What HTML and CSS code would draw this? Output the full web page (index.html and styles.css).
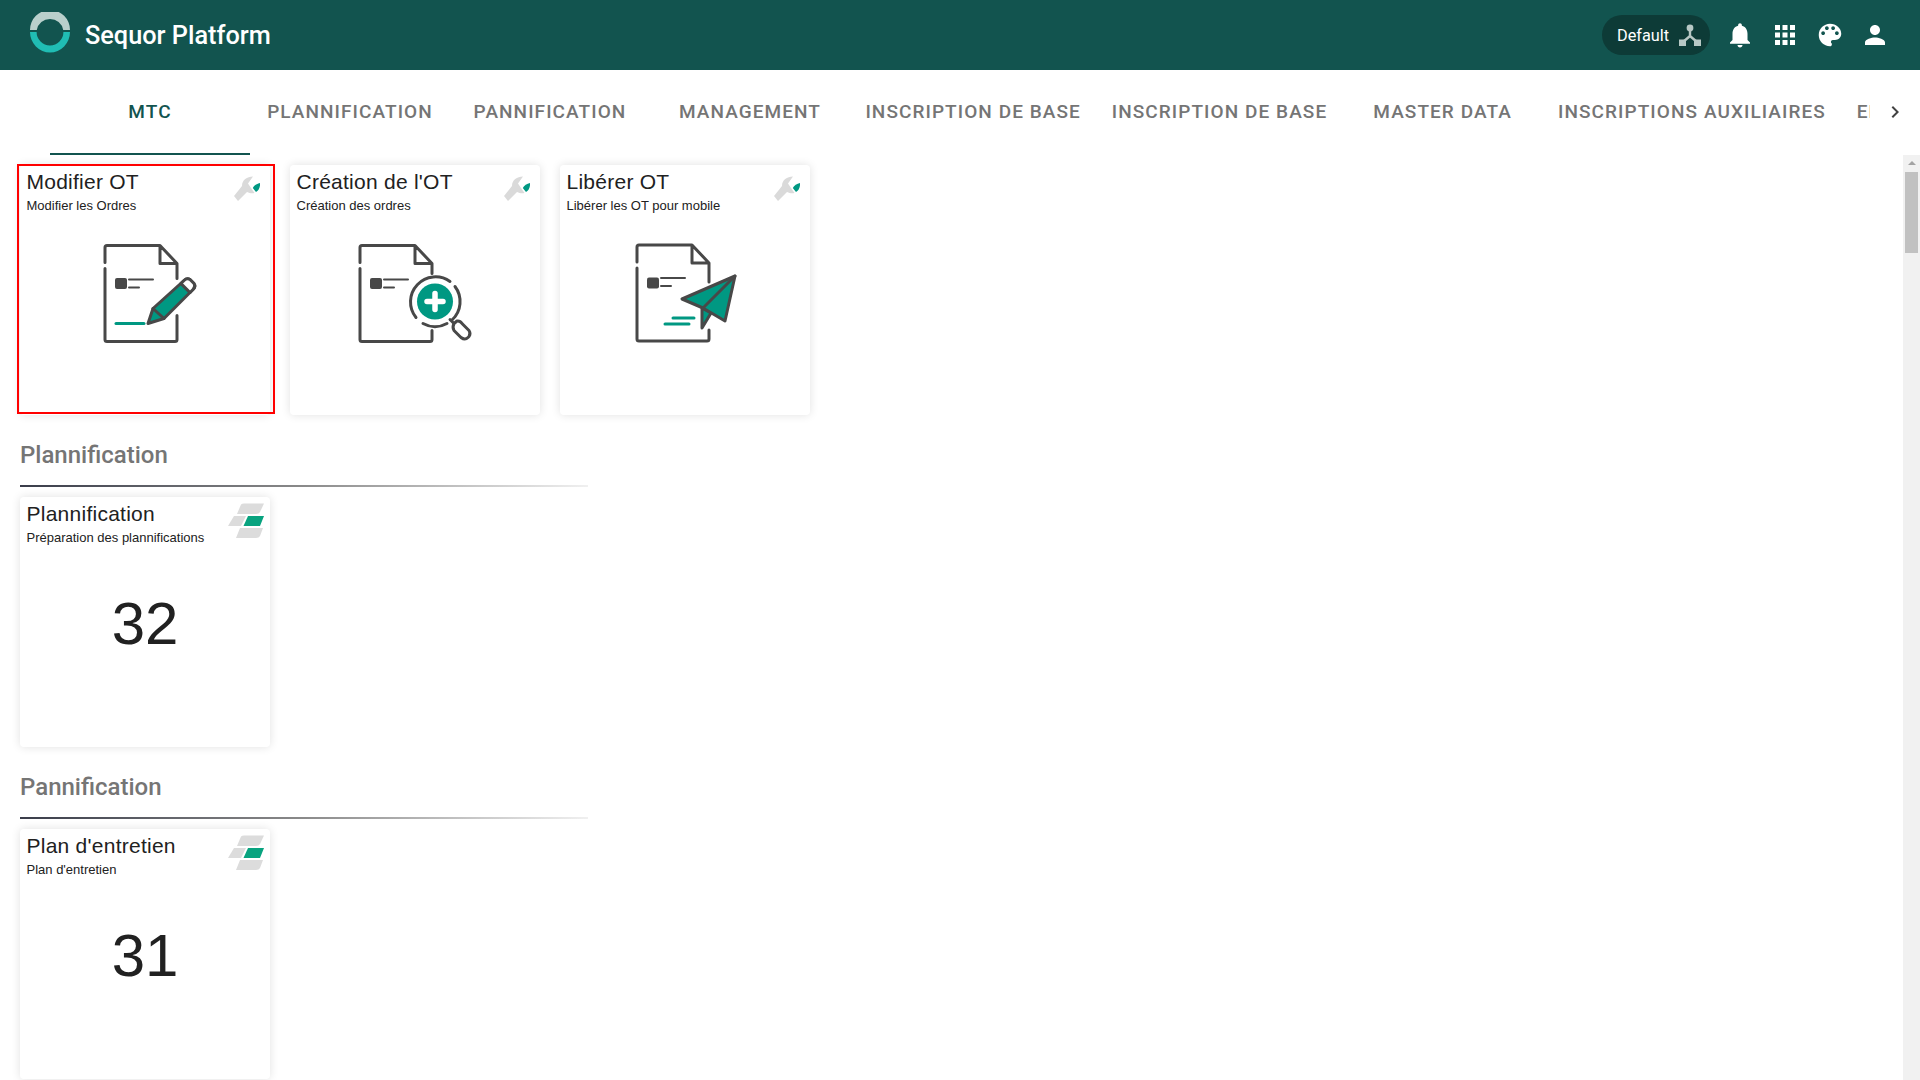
FILE: index.html
```html
<!DOCTYPE html>
<html lang="fr">
<head>
    <meta charset="UTF-8">
    <title>Sequor Platform</title>
    <link rel="stylesheet" href="styles.css">
</head>
<body>
    <header class="topbar">
        <div class="brand">
            <svg class="logo" width="42" height="42" viewBox="0 0 42 42">
                <path d="M1 18 A20 20 0 0 1 41 18 L34.2 18 A13.4 13.4 0 0 0 7.8 18 Z" fill="#b9d0cc"/>
                <path d="M1 20 L7.6 20 A13.4 13.4 0 0 0 34.4 20 L41 20 A20 20.5 0 0 1 1 20 Z" fill="#20bdb4"/>
            </svg>
            <span class="brandName">Sequor Platform</span>
        </div>
        <div class="actions">
            <div class="envPill">
                <span>Default</span>
                <svg width="24" height="24" viewBox="0 0 24 24">
                    <circle cx="12" cy="5" r="3.4" fill="#b7c8c5"/>
                    <path d="M12 6v7M12 13L5 19M12 13l7 6" stroke="#b7c8c5" stroke-width="2.4" fill="none"/>
                    <rect x="1" y="16.5" width="7" height="6.5" fill="#b7c8c5"/>
                    <rect x="16" y="16.5" width="7" height="6.5" fill="#b7c8c5"/>
                </svg>
            </div>
            <svg class="topIcon" viewBox="0 0 24 24"><path d="M12 22c1.1 0 2-.9 2-2h-4c0 1.1.89 2 2 2zm6-6v-5c0-3.07-1.64-5.64-4.5-6.32V4c0-.83-.67-1.5-1.5-1.5s-1.5.67-1.5 1.5v.68C7.63 5.36 6 7.92 6 11v5l-2 2v1h16v-1l-2-2z"/></svg>
            <svg class="topIcon" viewBox="0 0 24 24"><path d="M4 8h4V4H4v4zm6 12h4v-4h-4v4zm-6 0h4v-4H4v4zm0-6h4v-4H4v4zm6 0h4v-4h-4v4zm6-10v4h4V4h-4zm-6 4h4V4h-4v4zm6 6h4v-4h-4v4zm0 6h4v-4h-4v4z"/></svg>
            <svg class="topIcon" viewBox="0 0 24 24"><path d="M12 3c-4.97 0-9 4.03-9 9s4.03 9 9 9c.83 0 1.5-.67 1.5-1.5 0-.39-.15-.74-.39-1.01-.23-.26-.38-.61-.38-.99 0-.83.67-1.5 1.5-1.5H16c2.76 0 5-2.24 5-5 0-4.42-4.03-8-9-8zm-5.5 9c-.83 0-1.5-.67-1.5-1.5S5.67 9 6.5 9 8 9.67 8 10.5 7.33 12 6.5 12zm3-4C8.67 8 8 7.33 8 6.5S8.67 5 9.5 5s1.5.67 1.5 1.5S10.33 8 9.5 8zm5 0c-.83 0-1.5-.67-1.5-1.5S13.67 5 14.5 5s1.5.67 1.5 1.5S15.33 8 14.5 8zm3 4c-.83 0-1.5-.67-1.5-1.5S16.67 9 17.5 9s1.5.67 1.5 1.5-.67 1.5-1.5 1.5z"/></svg>
            <svg class="topIcon" viewBox="0 0 24 24"><path d="M12 12c2.21 0 4-1.79 4-4s-1.79-4-4-4-4 1.79-4 4 1.79 4 4 4zm0 2c-2.67 0-8 1.34-8 4v2h16v-2c0-2.66-5.33-4-8-4z"/></svg>
        </div>
    </header>

    <nav class="tabBar">
        <div class="tabList">
            <div class="tab active">MTC</div>
            <div class="tab">PLANNIFICATION</div>
            <div class="tab">PANNIFICATION</div>
            <div class="tab">MANAGEMENT</div>
            <div class="tab">INSCRIPTION DE BASE</div>
            <div class="tab">INSCRIPTION DE BASE</div>
            <div class="tab">MASTER DATA</div>
            <div class="tab">INSCRIPTIONS AUXILIAIRES</div>
            <div class="tab">ENTRETIEN PRÉVENTIF</div>
        </div>
        <div class="tabArrow">
            <svg width="24" height="24" viewBox="0 0 24 24"><path d="M10 6L8.59 7.41 13.17 12l-4.58 4.59L10 18l6-6z" fill="#424242"/></svg>
        </div>
    </nav>

    <div class="pageBody">
        <main class="content">
            <div class="cardRow">
                <div class="card selected">
                    <div class="cardHead">
                        <div>
                            <div class="cardTitle">Modifier OT</div>
                            <div class="cardSub">Modifier les Ordres</div>
                        </div>
                        <svg class="wrench" width="26" height="26" viewBox="0 0 26 26">
                            <path d="M19 .5C13 .5 8 4 8 10L0 20 4 25 13 16C16 17.500 18 17.500 20.500 17L17 12 14 7.500Z" fill="#dadada"/>
                            <path d="M26 7C26.300 11 25 14 22 16L18.800 12C20 9.500 23 7.500 26 7Z" fill="#009882"/>
                        </svg>
                    </div>
                    <svg class="docIcon" width="120" height="110" viewBox="0 0 120 110">
                        <g transform="translate(20 5.500)" fill="none" stroke="#484848" stroke-width="3" stroke-linejoin="round" stroke-linecap="round">
                            <path d="M0 17V2Q0 0 2 0H55L72 18V33M72 70V94Q72 96 70 96H2Q0 96 0 94V23M55 0V18H72"/>
                            <rect x="10" y="32.500" width="12" height="11" rx="2" fill="#484848" stroke="none"/>
                            <path d="M24 34H48M24 42H34" stroke-width="2"/>
                            <path d="M11 78H39" stroke="#009882"/>
                            <path d="M43 78L48 63 79 35Q82 32 85 34L89 38Q91 41 88 44L59 73Z" fill="#009882"/>
                            <path d="M48 63L59 73M76 38L85 47"/>
                            <path d="M79 35Q82 32 85 34L89 38Q91 41 88 44L85 47 76 38Z" fill="#fff"/>
                        </g>
                    </svg>
                </div>
                <div class="card">
                    <div class="cardHead">
                        <div>
                            <div class="cardTitle">Création de l'OT</div>
                            <div class="cardSub">Création des ordres</div>
                        </div>
                        <svg class="wrench" width="26" height="26" viewBox="0 0 26 26">
                            <path d="M19 .5C13 .5 8 4 8 10L0 20 4 25 13 16C16 17.500 18 17.500 20.500 17L17 12 14 7.500Z" fill="#dadada"/>
                            <path d="M26 7C26.300 11 25 14 22 16L18.800 12C20 9.500 23 7.500 26 7Z" fill="#009882"/>
                        </svg>
                    </div>
                    <svg class="docIcon" width="120" height="110" viewBox="0 0 120 110">
                        <g transform="translate(5 5.500)" fill="none" stroke="#484848" stroke-width="3" stroke-linejoin="round" stroke-linecap="round">
                            <path d="M0 17V2Q0 0 2 0H55L72 18V28M72 85V94Q72 96 70 96H2Q0 96 0 94V23M55 0V18H72"/>
                            <rect x="10" y="32.500" width="12" height="11" rx="2" fill="#484848" stroke="none"/>
                            <path d="M24 34H48M24 42H34" stroke-width="2"/>
                            <circle cx="75" cy="56" r="18" fill="#009882" stroke="none"/>
                            <path d="M56 72A25 25 0 0 1 90 36M95 41A25 25 0 0 1 92 74.500M63 78A25 25 0 0 0 87 78"/>
                            <path d="M67 56H83M75 48V64" stroke="#fff" stroke-width="5.500" stroke-linecap="round"/>
                            <path d="M90 74L94 78"/>
                            <path d="M94 78L97 75.500Q100 75 102 78L109 85Q111 88 109 91L108 92Q105 95 101 92L94 85Q92 82 94 78Z" fill="#fff"/>
                        </g>
                    </svg>
                </div>
                <div class="card">
                    <div class="cardHead">
                        <div>
                            <div class="cardTitle">Libérer OT</div>
                            <div class="cardSub">Libérer les OT pour mobile</div>
                        </div>
                        <svg class="wrench" width="26" height="26" viewBox="0 0 26 26">
                            <path d="M19 .5C13 .5 8 4 8 10L0 20 4 25 13 16C16 17.500 18 17.500 20.500 17L17 12 14 7.500Z" fill="#dadada"/>
                            <path d="M26 7C26.300 11 25 14 22 16L18.800 12C20 9.500 23 7.500 26 7Z" fill="#009882"/>
                        </svg>
                    </div>
                    <svg class="docIcon" width="120" height="110" viewBox="0 0 120 110">
                        <g transform="translate(12 5)" fill="none" stroke="#484848" stroke-width="3" stroke-linejoin="round" stroke-linecap="round">
                            <path d="M0 17V2Q0 0 2 0H55L72 18V37M72 85V94Q72 96 70 96H2Q0 96 0 94V23M55 0V18H72"/>
                            <rect x="10" y="32.500" width="12" height="11" rx="2" fill="#484848" stroke="none"/>
                            <path d="M24 33H48M24 41H34" stroke-width="2"/>
                            <path d="M36 73H57M28 79H52" stroke="#009882"/>
                            <path d="M65 63V83L74 68Z" fill="#009882"/>
                            <path d="M98 31L45 54 66 63 88 76Z" fill="#009882"/>
                            <path d="M98 31L66 63"/>
                        </g>
                    </svg>
                </div>
            </div>

            <section class="section">
                <h2 class="sectionTitle">Plannification</h2>
                <div class="sectionLine"></div>
                <div class="cardRow">
                    <div class="card">
                        <div class="cardHead zHead">
                            <div>
                                <div class="cardTitle">Plannification</div>
                                <div class="cardSub">Préparation des plannifications</div>
                            </div>
                            <svg class="layers" width="36" height="36" viewBox="0 0 36 36">
                                <path d="M13 1.500Q14 .5 16 .5H36L32 9Q31 11 28 11H9Z" fill="#dcdcdc"/>
                                <path d="M6 13H18L13 23H0Z" fill="#dcdcdc"/>
                                <path d="M20 13H36L32 23H15.500Z" fill="#08a37f"/>
                                <path d="M12 25H35L32 33Q31 35 28 35H8Z" fill="#dcdcdc"/>
                            </svg>
                        </div>
                        <div class="cardNumber">32</div>
                    </div>
                </div>
            </section>

            <section class="section">
                <h2 class="sectionTitle">Pannification</h2>
                <div class="sectionLine"></div>
                <div class="cardRow">
                    <div class="card">
                        <div class="cardHead zHead">
                            <div>
                                <div class="cardTitle">Plan d'entretien</div>
                                <div class="cardSub">Plan d'entretien</div>
                            </div>
                            <svg class="layers" width="36" height="36" viewBox="0 0 36 36">
                                <path d="M13 1.500Q14 .5 16 .5H36L32 9Q31 11 28 11H9Z" fill="#dcdcdc"/>
                                <path d="M6 13H18L13 23H0Z" fill="#dcdcdc"/>
                                <path d="M20 13H36L32 23H15.500Z" fill="#08a37f"/>
                                <path d="M12 25H35L32 33Q31 35 28 35H8Z" fill="#dcdcdc"/>
                            </svg>
                        </div>
                        <div class="cardNumber">31</div>
                    </div>
                </div>
            </section>
        </main>

        <div class="scrollTrack">
            <div class="scrollUp"></div>
            <div class="scrollThumb"></div>
        </div>
    </div>
</body>
</html>
```

FILE: styles.css
```css
body{
    margin: 0;
    height: 100vh;
    overflow: hidden;
    display: flex;
    flex-direction: column;
    font-family: "Liberation Sans", Arial, sans-serif;
    background-color: #fff;
}

/* barra superior */
.topbar{
    flex: none;
    height: 70px;
    display: flex;
    justify-content: space-between;
    align-items: center;
    background-color: #12544f;
    color: #fff;
}
.brand{
    display: flex;
    align-items: center;
    padding-left: 29px;
}
.logo{
    margin-right: 14px;
    margin-top: -4px;
}
.brandName{
    font-family: Roboto, sans-serif;
    font-weight: 500;
    font-size: 25.3px;
}
.actions{
    display: flex;
    align-items: center;
    gap: 15px;
    padding-right: 30px;
}
.envPill{
    width: 108px;
    height: 40px;
    box-sizing: border-box;
    padding: 0 8px 0 15px;
    display: flex;
    justify-content: space-between;
    align-items: center;
    border-radius: 20px;
    background-color: #0d3b37;
    font-family: Roboto, sans-serif;
    font-size: 16.3px;
}
.topIcon{
    width: 30px;
    height: 30px;
    fill: #fff;
}

/* tabs */
.tabBar{
    flex: none;
    height: 85px;
    display: flex;
    padding-left: 50px;
    box-sizing: border-box;
}
.tabList{
    flex: 1;
    min-width: 0;
    display: flex;
    overflow: hidden;
}
.tab{
    flex: none;
    min-width: 200px;
    padding: 0 15.4px;
    box-sizing: border-box;
    display: flex;
    justify-content: center;
    align-items: center;
    border-bottom: 2px solid transparent;
    font-family: Roboto, sans-serif;
    font-weight: 500;
    font-size: 19px;
    letter-spacing: 1.07px;
    color: #757575;
}
.tab.active{
    color: #12544f;
    border-bottom-color: #12544f;
}
.tabArrow{
    flex: none;
    width: 50px;
    display: flex;
    justify-content: center;
    align-items: center;
    padding-bottom: 2px;
    box-sizing: border-box;
}

/* contenido */
.pageBody{
    flex: 1;
    min-height: 0;
    display: flex;
}
.content{
    flex: 1;
    min-width: 0;
    overflow: hidden;
    padding: 10px 0 0 20px;
}
.cardRow{
    display: flex;
    gap: 20px;
}
.card{
    position: relative;
    flex: none;
    width: 250px;
    height: 250px;
    display: grid;
    background-color: #fff;
    border-radius: 4px;
    box-shadow: 0 0 10px rgba(0, 0, 0, .12);
    color: #212121;
}
.card > *{
    grid-area: 1 / 1;
}
.card.selected::after{
    content: '';
    position: absolute;
    top: -1px;
    left: -3px;
    right: -5px;
    bottom: 1px;
    border: 2px solid #f00;
}
.cardHead{
    display: flex;
    justify-content: space-between;
    align-items: flex-start;
    padding: 5px 10px 0 6.5px;
}
.cardTitle{
    font-size: 21px;
    line-height: 24px;
    letter-spacing: .25px;
}
.cardSub{
    font-size: 13px;
    line-height: 16px;
    margin-top: 4px;
}
.wrench{
    margin-top: 6px;
}
.zHead{
    padding-right: 6px;
}
.layers{
    margin-top: 1px;
}
.docIcon{
    justify-self: center;
    margin-top: 75px;
}
.cardNumber{
    justify-self: center;
    align-self: center;
    font-size: 60px;
    line-height: 70px;
    margin-top: 4px;
}
.section{
    margin-top: 26px;
}
.sectionTitle{
    margin: 0 0 16px 0;
    font-family: Roboto, sans-serif;
    font-weight: 500;
    font-size: 24px;
    line-height: 28px;
    color: #757575;
}
.sectionLine{
    width: 568px;
    height: 2px;
    margin-bottom: 10px;
    background: linear-gradient(to right, #3a3d4a, #8a8a8a 50%, #f0f0f0);
}

/* scroll */
.scrollTrack{
    flex: none;
    width: 17px;
    background-color: #f1f1f1;
}
.scrollUp{
    width: 0;
    height: 0;
    margin: 6px auto 0;
    border-left: 4px solid transparent;
    border-right: 4px solid transparent;
    border-bottom: 4px solid #a3a3a3;
}
.scrollThumb{
    width: 13px;
    height: 81px;
    margin: 7px auto 0;
    background-color: #c1c1c1;
}
```
